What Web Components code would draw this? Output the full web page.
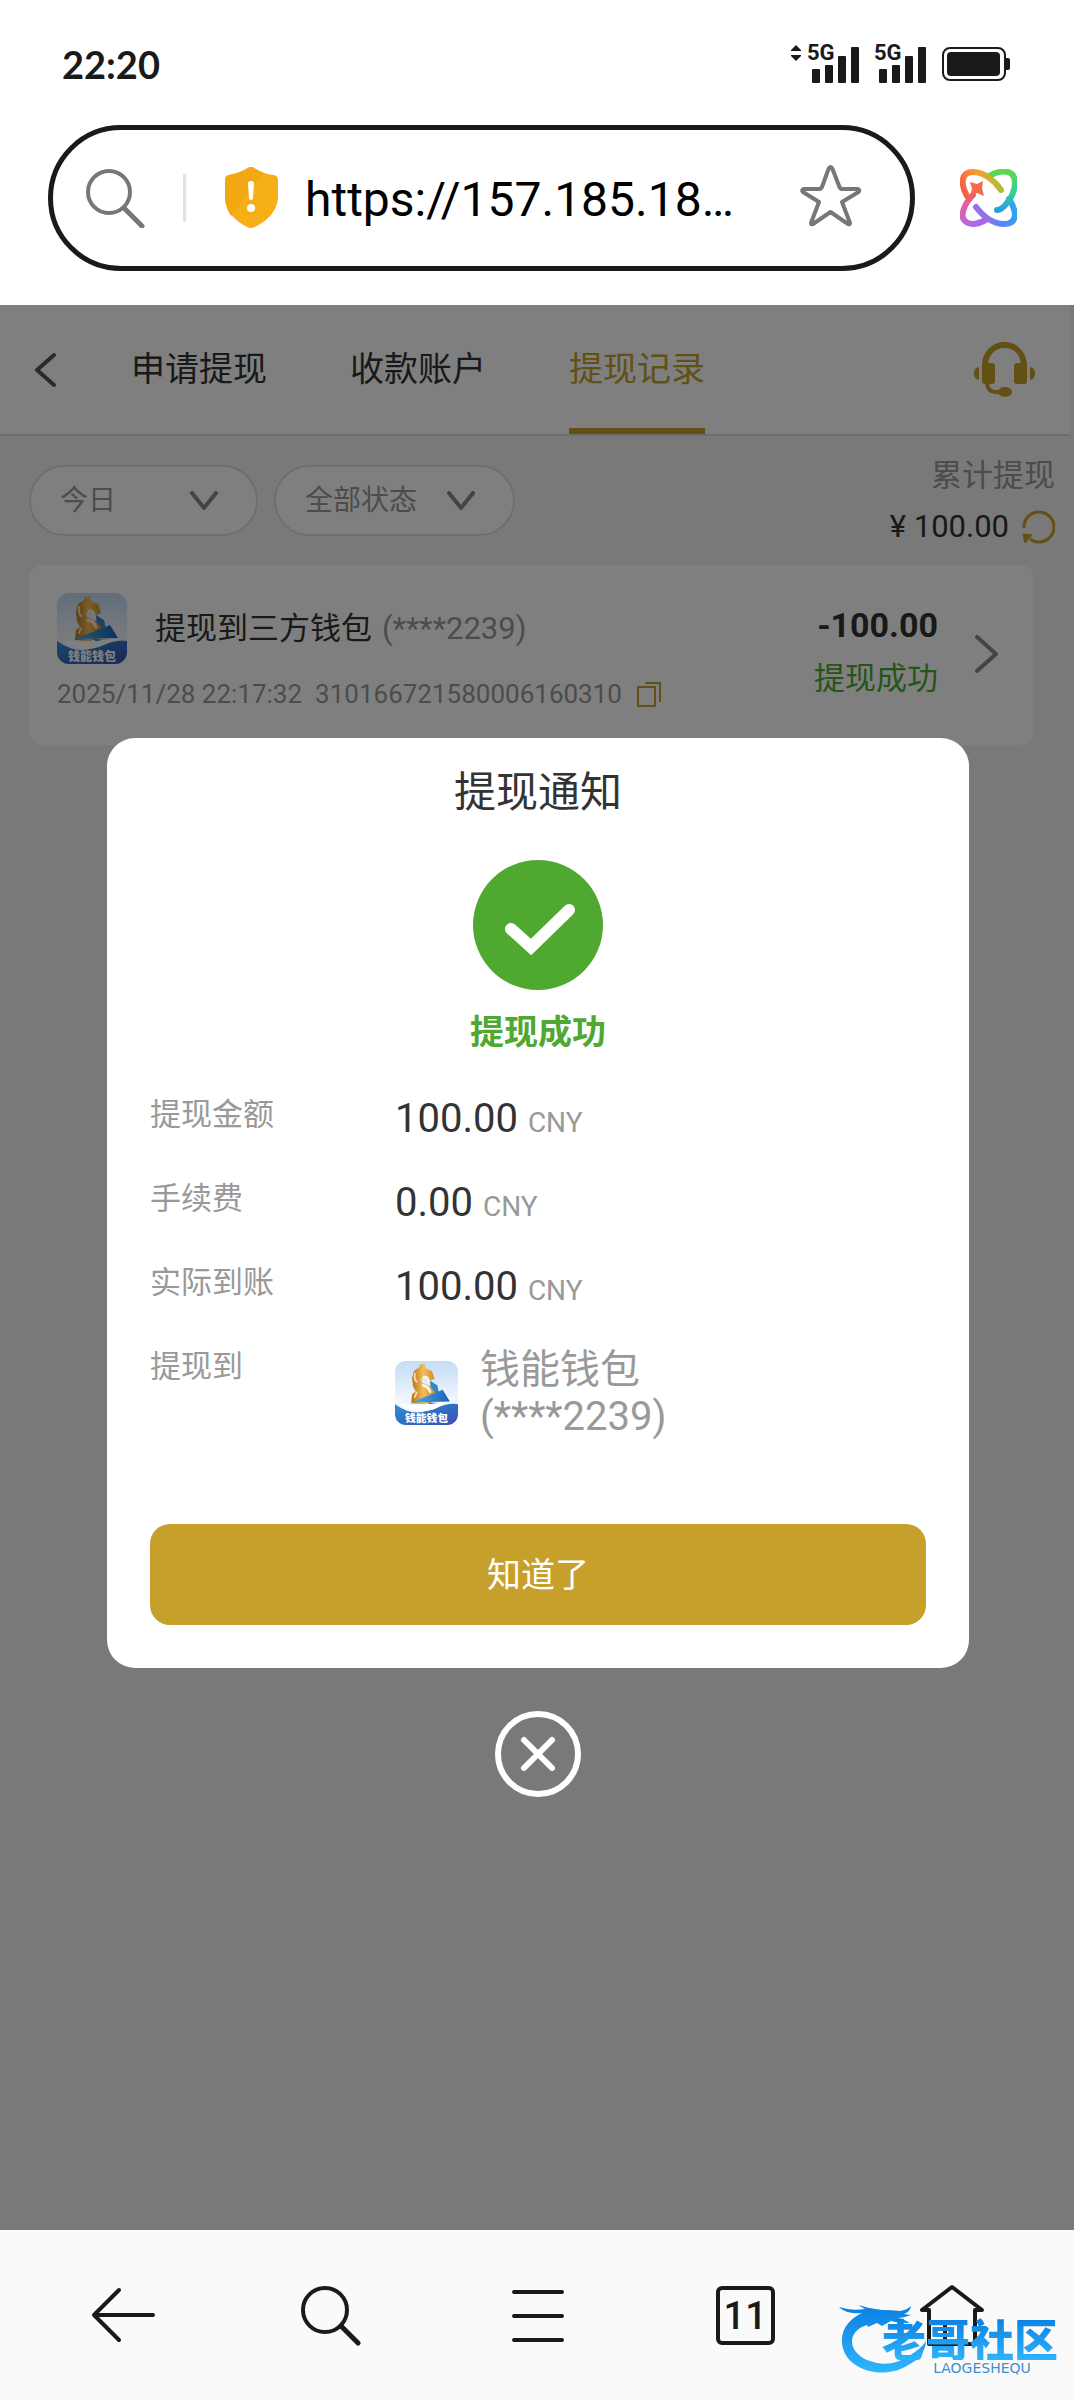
<!DOCTYPE html>
<html lang="zh-CN">
<head>
<meta charset="utf-8">
<meta name="viewport" content="width=device-width, initial-scale=1">
<title>提现记录</title>
<style>
  :root {
    --ink: #333;
    --muted: #999;
    --gold: #c6a02a;
    --green: #4fa830;
    --chrome: #1a1a1a;
  }
  html, body { margin: 0; }
  body {
    display: flex;
    flex-direction: column;
    min-height: 100vh;
    background: #fff;
    color: var(--ink);
    font-family: Roboto, "Noto Sans CJK SC", sans-serif;
  }
  page-view { flex: 1; }
</style>
</head>
<body>
  <status-bar time="22:20"></status-bar>
  <address-bar url="https://157.185.18…"></address-bar>
  <page-view>
    <page-header></page-header>
    <record-filter total="100.00"></record-filter>
    <record-card amount="-100.00" status="提现成功" date="2025/11/28 22:17:32" order="310166721580006160310">
      提现到三方钱包 <span slot="account">(****2239)</span>
    </record-card>
    <notice-dialog slot="dialog" heading="提现通知" status="提现成功">
      <detail-row label="提现金额">100.00 <span slot="unit">CNY</span></detail-row>
      <detail-row label="手续费">0.00 <span slot="unit">CNY</span></detail-row>
      <detail-row label="实际到账">100.00 <span slot="unit">CNY</span></detail-row>
      <detail-row class="tall" label="提现到">
        <wallet-account slot="wallet" name="钱能钱包" account="(****2239)"></wallet-account>
      </detail-row>
    </notice-dialog>
  </page-view>
  <browser-toolbar tabs="11"></browser-toolbar>

<script>
  const RESET = `
    * { box-sizing: border-box; }
    svg { display: block; flex: none; }
    button {
      display: flex;
      align-items: center;
      margin: 0;
      padding: 0;
      border: 0;
      background: none;
      color: inherit;
      font: inherit;
      cursor: pointer;
    }
  `;

  /** Base class: opens a shadow root and fills it from render() */
  class BaseElement extends HTMLElement {
    constructor() {
      super();
      this.attachShadow({ mode: "open" });
    }

    connectedCallback() {
      this.shadowRoot.innerHTML = `<style>${RESET}</style>${this.render()}`;
    }

    attr(name) {
      return this.getAttribute(name) || "";
    }
  }

  customElements.define("signal-bars", class extends BaseElement {
    render() {
      return `
        <style>
          :host { display: block; position: relative; width: 52px; height: 37px; }
          span {
            position: absolute;
            top: -4px;
            left: 0;
            font: 700 22px/22px Roboto, sans-serif;
          }
        </style>
        <span>5G</span>
        <svg width="52" height="37" viewBox="0 0 52 37" fill="currentColor" aria-hidden="true">
          <rect x="5" y="23" width="8" height="14" rx="1"/>
          <rect x="18" y="19" width="8" height="18" rx="1"/>
          <rect x="31" y="10" width="8" height="27" rx="1"/>
          <rect x="44" y="1" width="8" height="36" rx="1"/>
        </svg>`;
    }
  });

  customElements.define("status-bar", class extends BaseElement {
    render() {
      return `
        <style>
          :host {
            display: flex;
            align-items: center;
            padding: 43px 64px 40px 62px;
            color: var(--chrome);
          }
          time { flex: 1; font: 700 38px/42px Lato, sans-serif; }
          .arrows { align-self: flex-start; margin: 2px 6px 0 0; }
          signal-bars { margin-right: 15px; }
          .battery { margin-left: 1px; }
        </style>
        <time>${this.attr("time")}</time>
        <svg class="arrows" width="10" height="16" viewBox="0 0 10 16" fill="currentColor" aria-hidden="true">
          <path d="M5 0l5 5v1H0V5zM5 16l5-5v-1H0v1z"/>
        </svg>
        <signal-bars></signal-bars>
        <signal-bars></signal-bars>
        <svg class="battery" width="68" height="34" viewBox="0 0 68 34" aria-label="电量">
          <rect x="1" y="1" width="62" height="32" rx="7" fill="none" stroke="currentColor" stroke-width="2"/>
          <rect x="5" y="5" width="53" height="24" rx="4" fill="currentColor"/>
          <path d="M64 11h2q2 0 2 2v8q0 2-2 2h-2z" fill="currentColor"/>
        </svg>`;
    }
  });

  customElements.define("address-bar", class extends BaseElement {
    render() {
      return `
        <style>
          :host {
            display: flex;
            align-items: center;
            gap: 45px;
            padding: 0 57px 34px 48px;
          }
          form {
            flex: 1;
            display: flex;
            align-items: center;
            min-width: 0;
            height: 146px;
            padding: 0 48px 0 33px;
            border: 5px solid var(--chrome);
            border-radius: 73px;
          }
          .rule { width: 3px; height: 48px; margin: 0 38px; background: #e3e3e3; }
          input {
            flex: 1;
            min-width: 0;
            margin: 0 0 0 26px;
            padding: 4px 0 0;
            border: 0;
            outline: 0;
            background: none;
            color: #000;
            font: 48px/64px Roboto, sans-serif;
          }
        </style>
        <form>
          <svg width="59" height="60" viewBox="0 0 59 60" fill="none" stroke="#777" stroke-width="4" stroke-linecap="round" aria-hidden="true">
            <circle cx="23" cy="24" r="21"/>
            <path d="M38 40l18 18" stroke-width="5"/>
          </svg>
          <span class="rule"></span>
          <svg width="55" height="62" viewBox="0 0 55 62" aria-hidden="true">
            <path d="M27 0q2 0 3 1 9 6 20 7 4 1 4 5v16c0 15-11 25-23 31q-4 2-8 0C11 54 1 44 1 29V13q0-4 4-5Q16 6 24 1q1-1 3-1z" fill="#f6af17"/>
            <path d="M27 0q2 0 3 1 5 3 10 5L7 49Q1 40 1 29V13q0-4 4-5Q16 6 24 1q1-1 3-1z" fill="#f3a712"/>
            <path d="M24 16q0-2 3-2t3 2l-1 15q0 2-2 2t-2-2z" fill="#fff"/>
            <circle cx="27" cy="41" r="4" fill="#fff"/>
          </svg>
          <input type="text" aria-label="网址" value="${this.attr("url")}">
          <button type="button" aria-label="收藏">
            <svg width="63" height="68" viewBox="0 0 63 68" fill="none" stroke="#777" stroke-width="4" stroke-linejoin="round" aria-hidden="true">
              <path d="M31.500 3q1 0 2 2l7 18q1 2 3 2h15q3 1 1 3L43 38l8 21q0 2-2 1L31.500 48 14 60q-2 1-2-1l8-21L4 28q-2-2 1-3h15q2 0 3-2l6.500-18q1-2 2-2z"/>
            </svg>
          </button>
        </form>
        <button type="button" aria-label="浏览助手">
          <svg width="57" height="58" viewBox="0 0 57 58" fill="none" stroke-width="6" stroke-linecap="round" aria-hidden="true">
            <defs>
              <linearGradient id="a" gradientUnits="userSpaceOnUse" x1="2" y1="28" x2="44" y2="8">
                <stop offset="0" stop-color="#f5524d"/><stop offset=".5" stop-color="#fb9a2c"/><stop offset="1" stop-color="#8fce3a"/>
              </linearGradient>
              <linearGradient id="b" gradientUnits="userSpaceOnUse" x1="40" y1="2" x2="40" y2="44">
                <stop offset="0" stop-color="#5fd84f"/><stop offset=".5" stop-color="#33d09a"/><stop offset="1" stop-color="#2499ee"/>
              </linearGradient>
              <linearGradient id="c" gradientUnits="userSpaceOnUse" x1="14" y1="50" x2="54" y2="34">
                <stop offset="0" stop-color="#b267e6"/><stop offset=".5" stop-color="#5f83f4"/><stop offset="1" stop-color="#2ba7ec"/>
              </linearGradient>
              <linearGradient id="d" gradientUnits="userSpaceOnUse" x1="6" y1="24" x2="16" y2="56">
                <stop offset="0" stop-color="#f45a66"/><stop offset=".5" stop-color="#dc62b4"/><stop offset="1" stop-color="#a568ec"/>
              </linearGradient>
            </defs>
            <path d="M16 38C23 47 33 55 44 55C58 55 57 42 49 30" stroke="url(#c)"/>
            <path d="M13 26C3 36 0 48 5 52C10 57 20 55 27 50" stroke="url(#d)"/>
            <path d="M29 7C38 2 47 1 52 5C58 12 54 26 47 34C44 38 41 41 37 41" stroke="url(#b)"/>
            <path d="M41 21C35 12 24 3 13 3C0 3 1 16 7 27" stroke="url(#a)"/>
            <path d="M10 13l7 2 6-3-1 7 2 8-7-3-7 3 2-7z" fill="#f8694a"/>
          </svg>
        </button>`;
    }
  });

  // Web page area, with a dimmed layer over it for the dialog slot
  customElements.define("page-view", class extends BaseElement {
    render() {
      return `
        <style>
          :host { display: block; position: relative; background: #f2f2f2; }
          .mask {
            position: absolute;
            inset: 0;
            display: flex;
            align-items: center;
            padding: 0 105px 0 107px;
            background: rgba(0, 0, 0, .5);
          }
          ::slotted([slot="dialog"]) { flex: 1; }
        </style>
        <slot></slot>
        <div class="mask"><slot name="dialog"></slot></div>`;
    }
  });

  customElements.define("page-header", class extends BaseElement {
    render() {
      return `
        <style>
          :host {
            display: flex;
            align-items: center;
            margin-right: 4px;
            padding: 0 35px;
            border-bottom: 2px solid #ddd;
            background: #fff;
          }
          nav { display: flex; flex: 1; gap: 83px; margin-left: 75px; }
          a {
            height: 129px;
            border-bottom: 6px solid transparent;
            color: var(--ink);
            font-size: 34px;
            line-height: 129px;
            text-decoration: none;
          }
          a[aria-current] {
            color: var(--gold);
            background: linear-gradient(var(--gold), var(--gold)) bottom / 100% 6px no-repeat border-box;
          }
        </style>
        <button type="button" aria-label="返回">
          <svg width="21" height="36" viewBox="0 0 21 36" fill="none" stroke="#555" stroke-width="4" stroke-linecap="round" stroke-linejoin="round" aria-hidden="true">
            <path d="M19 3L2 18l17 15"/>
          </svg>
        </button>
        <nav>
          <a href="#apply">申请提现</a>
          <a href="#accounts">收款账户</a>
          <a href="#records" aria-current="page">提现记录</a>
        </nav>
        <button type="button" aria-label="客服">
          <svg width="61" height="56" viewBox="0 0 61 56" fill="var(--gold)" aria-hidden="true">
            <path d="M8 24C8 10 18 0 30.500 0S53 10 53 24h-6C47 13 40 6 30.500 6S14 13 14 24z"/>
            <rect x="8" y="21" width="13" height="21" rx="3"/>
            <rect x="40" y="21" width="13" height="21" rx="3"/>
            <path d="M5 25v13C-2 37-2 26 5 25zM56 25v13c7-1 7-12 0-13z"/>
            <path d="M13 41q1 9 8 9h7" fill="none" stroke="var(--gold)" stroke-width="4"/>
            <ellipse cx="31" cy="50" rx="7" ry="5"/>
          </svg>
        </button>`;
    }
  });

  customElements.define("filter-select", class extends BaseElement {
    render() {
      return `
        <style>
          :host { display: grid; align-items: center; }
          select, svg { grid-area: 1 / 1; }
          select {
            appearance: none;
            height: 71px;
            margin: 0;
            padding: 0 29px;
            border: 2px solid #ddd;
            border-radius: 36px;
            background: #fff;
            color: var(--muted);
            font: inherit;
            font-size: 28px;
          }
          svg { justify-self: end; margin-right: 39px; pointer-events: none; }
        </style>
        <select aria-label="${this.attr("label")}"><option>${this.attr("value")}</option></select>
        <svg width="30" height="20" viewBox="0 0 30 20" fill="none" stroke="#888" stroke-width="4" stroke-linecap="round" stroke-linejoin="round" aria-hidden="true">
          <path d="M3 2l12 15L27 2"/>
        </svg>`;
    }
  });

  customElements.define("record-filter", class extends BaseElement {
    render() {
      return `
        <style>
          :host { display: flex; gap: 16px; padding: 14px 19px 13px 29px; }
          filter-select { align-self: flex-start; flex: 0 0 229px; margin-top: 15px; }
          .status { flex-basis: 241px; }
          .total {
            flex: 1;
            display: flex;
            flex-direction: column;
            align-items: flex-end;
            font-size: 31px;
            line-height: 51px;
          }
          .total span { color: var(--muted); }
          .sum { display: flex; align-items: center; gap: 13px; }
        </style>
        <filter-select label="日期" value="今日"></filter-select>
        <filter-select class="status" label="状态" value="全部状态"></filter-select>
        <div class="total">
          <span>累计提现</span>
          <div class="sum">
            ¥ ${this.attr("total")}
            <button type="button" aria-label="刷新">
              <svg width="33" height="34" viewBox="0 0 33 34" fill="none" stroke="var(--gold)" stroke-width="3" aria-hidden="true">
                <path d="M2 18A15 15 0 1 1 8 29"/>
                <path d="M1 24l9 1-7 8z" fill="var(--gold)" stroke-width="1"/>
              </svg>
            </button>
          </div>
        </div>`;
    }
  });

  customElements.define("wallet-logo", class extends BaseElement {
    render() {
      return `
        <style>
          :host { display: block; flex: none; }
          svg { width: 100%; height: auto; border-radius: 17%; }
        </style>
        <svg viewBox="0 0 70 71" role="img" aria-label="钱能钱包">
          <defs>
            <linearGradient id="sky" x1="0" y1="0" x2="0" y2="1">
              <stop offset="0" stop-color="#c3dcf6"/><stop offset=".6" stop-color="#f0f6fd"/>
            </linearGradient>
            <linearGradient id="sea" x1="0" y1="0" x2="1" y2="1">
              <stop offset="0" stop-color="#2b8fd8"/><stop offset="1" stop-color="#3a4fb0"/>
            </linearGradient>
            <linearGradient id="sail" x1="0" y1="0" x2="1" y2="0">
              <stop offset="0" stop-color="#49b4ea"/><stop offset="1" stop-color="#1d5fb4"/>
            </linearGradient>
            <linearGradient id="coin" x1="0" y1="0" x2="1" y2="0">
              <stop offset="0" stop-color="#b96f14"/><stop offset=".5" stop-color="#f3bd5b"/><stop offset="1" stop-color="#cf8a2a"/>
            </linearGradient>
          </defs>
          <path d="M0 0h70v71H0z" fill="url(#sky)"/>
          <path d="M39 22l8 5 3 14-10 2z" fill="#3286cf"/>
          <path d="M28 4l5-1 1 5 7 3 3 9-5 2-5-4-5 2 1 4 9 4 6 7-1 10-12 3-14-1 1-10 4-3-3-6-1-9 2-8 6-4z" fill="url(#coin)"/>
          <path d="M32 18q5-1 5 5M31 27q6 1 8 7" stroke="#fff3d6" stroke-width="3" fill="none" stroke-linecap="round"/>
          <path d="M22 14q-1 6 2 9M24 35l-2 5" stroke="#ffe0a0" stroke-width="2" fill="none" stroke-linecap="round"/>
          <path d="M18 46L53 32l8 13z" fill="url(#sail)"/>
          <path d="M36 46l16 1-5 7z" fill="#2c62b5"/>
          <path d="M0 48q20 14 35 7 15-10 35-7v23H0z" fill="url(#sea)"/>
          <path d="M3 47q22 3 30 2 18-4 34-2-12 1-20 5-10 5-22 4-12-1-22-9z" fill="#fff"/>
          <text x="35" y="68" text-anchor="middle" fill="#fff" font-family="Noto Sans CJK SC, sans-serif" font-weight="900" font-size="12">钱能钱包</text>
        </svg>`;
    }
  });

  customElements.define("record-card", class extends BaseElement {
    render() {
      return `
        <style>
          :host {
            display: flex;
            align-items: center;
            margin: 0 40px 0 29px;
            padding: 28px 35px 38px 28px;
            border-radius: 14px;
            background: #fff;
          }
          .main { flex: 1; }
          .title { display: flex; align-items: center; gap: 28px; font-size: 31px; line-height: 71px; }
          .title div { display: flex; gap: 10px; }
          wallet-logo { width: 70px; }
          ::slotted(span) { color: var(--muted); }
          .meta {
            display: flex;
            align-items: center;
            gap: 13px;
            margin-top: 17px;
            color: var(--muted);
            font-size: 26px;
            line-height: 26px;
          }
          .result { margin: 0 37px -8px 0; text-align: right; line-height: 53px; }
          .result b { display: block; font-size: 34px; }
          .result span { color: var(--green); font-size: 31px; }
          .more { margin-bottom: -8px; }
        </style>
        <div class="main">
          <div class="title">
            <wallet-logo></wallet-logo>
            <div><slot></slot><slot name="account"></slot></div>
          </div>
          <div class="meta">
            <time>${this.attr("date")}</time>
            <span>${this.attr("order")}</span>
            <button type="button" aria-label="复制">
              <svg width="26" height="26" viewBox="0 0 26 26" fill="none" stroke="var(--gold)" stroke-width="2" aria-hidden="true">
                <path d="M3 6h17v19H3zM10 2h15v19"/>
              </svg>
            </button>
          </div>
        </div>
        <div class="result">
          <b>${this.attr("amount")}</b>
          <span>${this.attr("status")}</span>
        </div>
        <button class="more" type="button" aria-label="详情">
          <svg width="24" height="38" viewBox="0 0 24 38" fill="none" stroke="#888" stroke-width="4" stroke-linecap="round" stroke-linejoin="round" aria-hidden="true">
            <path d="M2 2l19 17L2 36"/>
          </svg>
        </button>`;
    }
  });

  customElements.define("detail-row", class extends BaseElement {
    render() {
      return `
        <style>
          :host { display: flex; height: 84px; line-height: 78px; }
          :host(.tall) { height: auto; }
          .label { flex: 0 0 245px; padding-top: 4px; color: var(--muted); font-size: 31px; }
          .value { padding-top: 8px; font-size: 40px; }
          ::slotted([slot="unit"]) { color: var(--muted); font-size: 28px; }
        </style>
        <div class="label">${this.attr("label")}</div>
        <div class="value"><slot></slot><slot name="unit"></slot><slot name="wallet"></slot></div>`;
    }
  });

  customElements.define("wallet-account", class extends BaseElement {
    render() {
      return `
        <style>
          :host {
            display: flex;
            align-items: center;
            gap: 22px;
            margin-top: 14px;
            color: var(--muted);
            line-height: 47px;
          }
          wallet-logo { width: 63px; }
          div > div { white-space: nowrap; }
        </style>
        <wallet-logo></wallet-logo>
        <div>
          <div>${this.attr("name")}</div>
          <div>${this.attr("account")}</div>
        </div>`;
    }
  });

  customElements.define("notice-dialog", class extends BaseElement {
    render() {
      return `
        <style>
          :host { display: flex; flex-direction: column; align-items: center; gap: 43px; }
          section {
            display: flex;
            flex-direction: column;
            align-items: center;
            align-self: stretch;
            padding: 29px 43px 43px;
            border-radius: 28px;
            background: #fff;
          }
          h2 { margin: 0 0 41px; font-size: 42px; font-weight: 400; line-height: 52px; }
          .status { margin: 18px 0 16px; color: var(--green); font-size: 34px; font-weight: 700; line-height: 48px; }
          .rows { align-self: stretch; }
          .ok {
            align-self: stretch;
            justify-content: center;
            height: 101px;
            margin-top: 84px;
            padding-bottom: 4px;
            border-radius: 20px;
            background: var(--gold);
            color: #fff;
            font-size: 34px;
          }
        </style>
        <section role="dialog" aria-labelledby="heading">
          <h2 id="heading">${this.attr("heading")}</h2>
          <svg width="130" height="130" viewBox="0 0 130 130" aria-hidden="true">
            <circle cx="65" cy="65" r="65" fill="var(--green)"/>
            <path d="M38 69l20 18 38-37" fill="none" stroke="#fff" stroke-width="12" stroke-linecap="round"/>
          </svg>
          <div class="status">${this.attr("status")}</div>
          <div class="rows"><slot></slot></div>
          <button class="ok" type="button">知道了</button>
        </section>
        <button type="button" aria-label="关闭">
          <svg width="86" height="86" viewBox="0 0 86 86" fill="none" stroke="#fff" stroke-width="6" stroke-linecap="round" aria-hidden="true">
            <circle cx="43" cy="43" r="40"/>
            <path d="M29 29l28 28M57 29L29 57"/>
          </svg>
        </button>`;
    }
  });

  customElements.define("site-mark", class extends BaseElement {
    render() {
      return `
        <style>
          :host { display: flex; align-items: flex-end; pointer-events: none; }
          svg { margin-right: -47px; }
          div { text-align: center; }
          b {
            display: block;
            color: transparent;
            background: linear-gradient(#0a7fe0, #2fb2fb);
            -webkit-background-clip: text;
            background-clip: text;
            font: 900 44px/44px "Noto Sans CJK SC", sans-serif;
          }
          small { display: block; padding-left: 24px; color: #3f8fd0; font: 14px/16px "DejaVu Sans", sans-serif; }
        </style>
        <svg width="90" height="72" viewBox="0 0 90 72" aria-hidden="true">
          <defs>
            <linearGradient id="g" x1="0" y1="0" x2="0" y2="1">
              <stop offset="0" stop-color="#0a7fe0"/><stop offset="1" stop-color="#2fb5ff"/>
            </linearGradient>
          </defs>
          <path d="M0 3q12 4 26 2L19 1q12 4 24 5 10 0 18 1 7-1 11-5-1 6-7 8l7 1q-8 3-13 3 6 1 12 5-11 0-19-2l-9 5-5-3-9 4-1-2C8 27 8 47 28 56q22 9 42-4 12-7 17-15-1 15-16 23C45 78 4 66 3 38 2 24 12 14 23 9 13 10 5 8 0 3z" fill="url(#g)"/>
        </svg>
        <div><b>老哥社区</b><small>LAOGESHEQU</small></div>`;
    }
  });

  customElements.define("browser-toolbar", class extends BaseElement {
    render() {
      return `
        <style>
          :host {
            position: relative;
            display: flex;
            align-items: center;
            height: 170px;
            padding: 0 18px 0 20px;
            background: #fafafa;
            color: var(--chrome);
          }
          button { flex: 1; justify-content: center; }
          .tabs span {
            width: 59px;
            height: 59px;
            border: 4px solid;
            border-radius: 6px;
            font-size: 38px;
            font-weight: 500;
            line-height: 52px;
          }
          svg { fill: none; stroke: currentColor; stroke-width: 4; stroke-linecap: round; stroke-linejoin: round; }
          /* site watermark printed over the corner */
          site-mark { position: absolute; right: 16px; bottom: 24px; }
        </style>
        <button type="button" aria-label="后退">
          <svg width="66" height="56" viewBox="0 0 66 56"><path d="M62 28H3M28 3L3 28l25 25"/></svg>
        </button>
        <button type="button" aria-label="搜索">
          <svg width="62" height="62" viewBox="0 0 62 62"><circle cx="25" cy="26" r="22"/><path d="M41 42l17 17" stroke-width="5"/></svg>
        </button>
        <button type="button" aria-label="菜单">
          <svg width="54" height="56" viewBox="0 0 54 56"><path d="M3 5h48M3 29h48M3 53h48"/></svg>
        </button>
        <button class="tabs" type="button" aria-label="标签页"><span>${this.attr("tabs")}</span></button>
        <button type="button" aria-label="主页">
          <svg width="66" height="62" viewBox="0 0 66 62"><path d="M33 3L3 26h7v34h46V26h7zM26 60V39h14v21"/></svg>
        </button>
        <site-mark></site-mark>`;
    }
  });
</script>
</body>
</html>
